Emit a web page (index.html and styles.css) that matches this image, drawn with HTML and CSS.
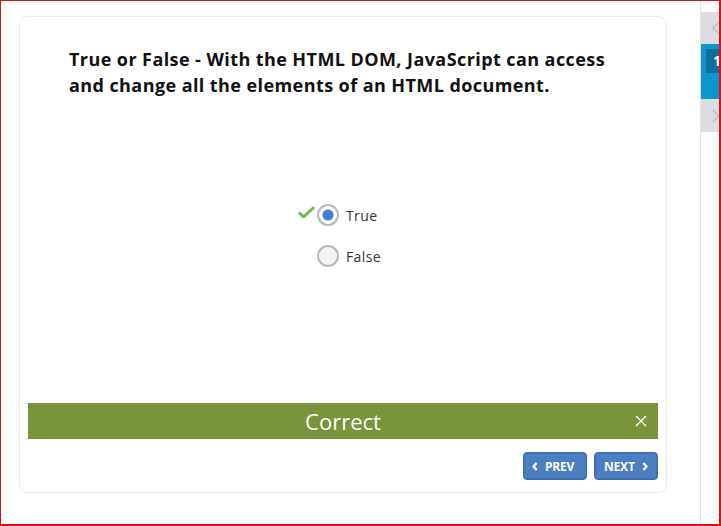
FILE: index.html
```html
<!DOCTYPE html>
<html>
<head>
<meta charset="utf-8">
<link rel="stylesheet" href="styles.css">
</head>
<body>
<div class="frame">
  <main class="main">
    <section class="card">
      <h1 class="question">True or False - With the HTML DOM, JavaScript can access and change all the elements of an HTML document.</h1>
      <div class="options-wrap">
        <div class="options">
          <label class="option">
            <svg class="check" width="17" height="13" viewBox="0 0 17 13"><path d="M1.8 7.4 L5.6 10.8 L15.2 2" fill="none" stroke="#6cbb55" stroke-width="3" stroke-linecap="round" stroke-linejoin="round"/></svg>
            <span class="radio selected"></span>
            <span class="label">True</span>
          </label>
          <label class="option">
            <span class="radio"></span>
            <span class="label">False</span>
          </label>
        </div>
      </div>
      <div class="spacer"></div>
      <div class="feedback">
        <span class="feedback-text">Correct</span>
        <svg class="close" width="12" height="12" viewBox="0 0 12 12"><path d="M1 1 L11 11 M11 1 L1 11" stroke="#fff" stroke-width="1.4"/></svg>
      </div>
      <div class="nav">
        <button class="btn btn-prev"><svg width="6" height="9" viewBox="0 0 6 9"><path d="M4.6 1 L1.5 4.5 L4.6 8" fill="none" stroke="#fff" stroke-width="2.2"/></svg><span>PREV</span></button>
        <button class="btn btn-next"><span>NEXT</span><svg width="6" height="9" viewBox="0 0 6 9"><path d="M1.4 1 L4.5 4.5 L1.4 8" fill="none" stroke="#fff" stroke-width="2.2"/></svg></button>
      </div>
    </section>
  </main>
  <aside class="sidebar">
    <div class="side-btn side-up"><svg width="8" height="14" viewBox="0 0 8 14"><path d="M7 1 L1 7 L7 13" fill="none" stroke="#b4bac2" stroke-width="1.2"/></svg></div>
    <div class="side-current"><span class="page-num">1</span></div>
    <div class="side-btn side-down"><svg width="8" height="14" viewBox="0 0 8 14"><path d="M1 1 L7 7 L1 13" fill="none" stroke="#b4bac2" stroke-width="1.2"/></svg></div>
  </aside>
</div>
</body>
</html>
```

FILE: styles.css
```css
html, body {
  margin: 0;
  padding: 0;
  background: #fff;
}
body {
  font-family: "Open Sans", "Liberation Sans", sans-serif;
}
.frame {
  box-sizing: border-box;
  width: 721px;
  height: 526px;
  border-top: 1px solid #d8141a;
  border-left: 1px solid #d8141a;
  border-right: 2px solid #d8141a;
  border-bottom: 2px solid #d8141a;
  display: flex;
  overflow: hidden;
}
.main {
  width: 699px;
  flex: none;
  padding: 15px 0 0 18px;
  box-sizing: border-box;
}
.card {
  box-sizing: border-box;
  width: 648px;
  height: 477px;
  border: 1px solid #ebebeb;
  border-radius: 9px;
  display: flex;
  flex-direction: column;
  padding: 0 8px 12px 8px;
}
.question {
  margin: 0;
  padding: 29px 30px 0 41px;
  font-size: 18px;
  line-height: 26px;
  font-weight: 700;
  letter-spacing: 0.42px;
  color: #111;
}
.options-wrap {
  margin-top: 106px;
  text-align: center;
}
.options {
  display: inline-flex;
  flex-direction: column;
  gap: 19px;
  text-align: left;
  margin-left: 12px;
}
.option {
  position: relative;
  display: flex;
  align-items: center;
  height: 22px;
}
.check {
  position: absolute;
  right: calc(100% + 2px);
  top: 2px;
}
.radio {
  box-sizing: border-box;
  width: 22px;
  height: 22px;
  border-radius: 50%;
  border: 2.5px solid #b9b9b9;
  background: #f1f1f1;
  flex: none;
}
.radio.selected {
  background: radial-gradient(circle at 50% 50%, #3f7fcf 0, #3f7fcf 5px, #fff 6px);
}
.label {
  margin-left: 7px;
  font-size: 14px;
  letter-spacing: 0.4px;
  color: #333;
}
.spacer {
  flex: 1;
}
.feedback {
  position: relative;
  height: 36px;
  background: #7a943b;
  display: flex;
  align-items: center;
  justify-content: center;
}
.feedback-text {
  color: #fff;
  font-size: 22px;
  font-weight: 400;
  line-height: 36px;
}
.close {
  position: absolute;
  right: 11px;
  top: 12px;
}
.nav {
  margin-top: 13px;
  display: flex;
  justify-content: flex-end;
  gap: 7px;
}
.btn {
  box-sizing: border-box;
  width: 64px;
  height: 28px;
  border: 1px solid #3e6ca9;
  border-radius: 4px;
  background: #4b7fc2;
  box-shadow: inset 0 0 2px rgba(30, 60, 110, 0.5);
  color: #fff;
  font-family: "Open Sans", "Liberation Sans", sans-serif;
  font-size: 12px;
  font-weight: 700;
  display: flex;
  align-items: center;
  gap: 7px;
  padding: 0 0 0 8px;
  letter-spacing: -0.2px;
}
.btn-next {
  padding-left: 9px;
}
.sidebar {
  flex: none;
  width: 19px;
  border-left: 1px solid #e2e4e7;
  overflow: hidden;
  padding-top: 11px;
}
.side-btn {
  width: 40px;
  height: 32px;
  background: #dadee3;
  display: flex;
  align-items: center;
  padding-left: 11px;
  box-sizing: border-box;
}
.side-down {
  height: 33px;
}
.side-current {
  width: 40px;
  height: 55px;
  background: #0c97cb;
  padding: 5px 0 0 5px;
  box-sizing: border-box;
}
.page-num {
  display: block;
  width: 24px;
  height: 24px;
  background: #0b6e9c;
  color: #fff;
  font-weight: 700;
  font-size: 14px;
  line-height: 24px;
  padding-left: 7px;
  box-sizing: border-box;
}
```
